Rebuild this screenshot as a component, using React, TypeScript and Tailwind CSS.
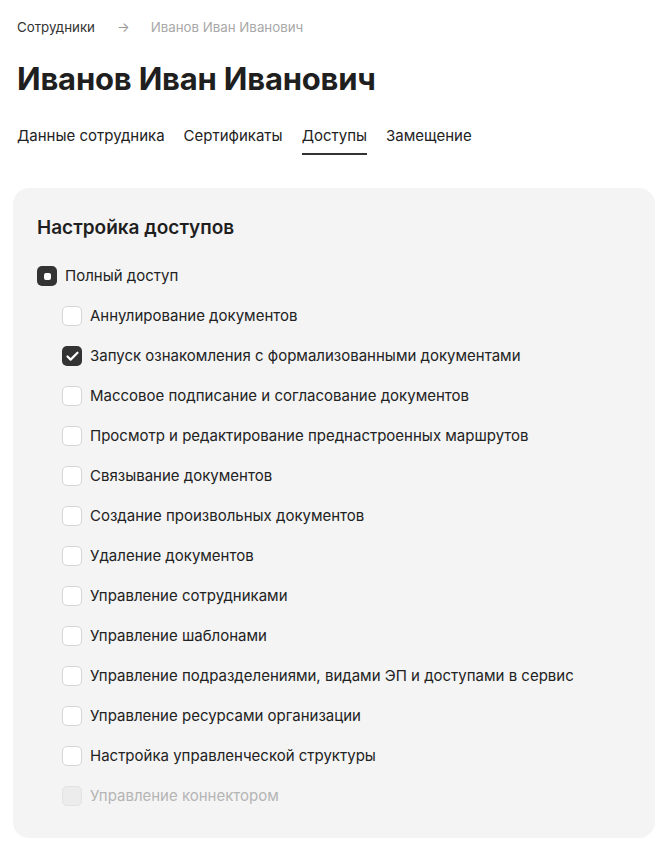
import { Check } from 'lucide-react';

type Perm = { label: string; checked?: boolean; disabled?: boolean };

const perms: Perm[] = [
  { label: 'Аннулирование документов' },
  { label: 'Запуск ознакомления с формализованными документами', checked: true },
  { label: 'Массовое подписание и согласование документов' },
  { label: 'Просмотр и редактирование преднастроенных маршрутов' },
  { label: 'Связывание документов' },
  { label: 'Создание произвольных документов' },
  { label: 'Удаление документов' },
  { label: 'Управление сотрудниками' },
  { label: 'Управление шаблонами' },
  { label: 'Управление подразделениями, видами ЭП и доступами в сервис' },
  { label: 'Управление ресурсами организации' },
  { label: 'Настройка управленческой структуры' },
  { label: 'Управление коннектором', disabled: true },
];

const tabs = ['Данные сотрудника', 'Сертификаты', 'Доступы', 'Замещение'];

function Box({ state }: { state: 'off' | 'on' | 'partial' | 'disabled' }) {
  if (state === 'on') {
    return (
      <span className="flex h-5 w-5 shrink-0 items-center justify-center rounded-[5px] bg-[#333333]">
        <Check size={15} strokeWidth={3.5} className="text-white" />
      </span>
    );
  }
  if (state === 'partial') {
    return (
      <span className="flex h-5 w-5 shrink-0 items-center justify-center rounded-[5px] bg-[#333333]">
        <span className="h-[7px] w-[7px] rounded-[2px] bg-white" />
      </span>
    );
  }
  if (state === 'disabled') {
    return <span className="h-5 w-5 shrink-0 rounded-[5px] border border-[#e2e2e2] bg-[#ececec]" />;
  }
  return <span className="h-5 w-5 shrink-0 rounded-[5px] border border-[#d6d6d6] bg-white" />;
}

export default function App() {
  return (
    <div
      className="min-h-[853px] bg-white px-[17px] pt-[18px] text-[#222222]"
      style={{ fontFamily: 'Inter, "Noto Sans", sans-serif' }}
    >
      <div className="flex items-center text-[13.3px] leading-[18px]">
        <span className="text-[#333333]">Сотрудники</span>
        <span className="ml-[22px] mr-[21px] text-[#9a9a9a]">→</span>
        <span className="text-[#a8a8a8]">Иванов Иван Иванович</span>
      </div>

      <h1 className="mt-[23px] text-[31px] font-bold leading-[40px] tracking-[-0.2px] text-[#1f1f1f]">
        Иванов Иван Иванович
      </h1>

      <div className="mt-[26px] flex gap-[19px] text-[15px] leading-[22px]">
        {tabs.map((t) => (
          <div
            key={t}
            className={
              t === 'Доступы'
                ? 'border-b-2 border-[#333333] pb-[6px] text-[#222222]'
                : 'pb-[8px] text-[#222222]'
            }
          >
            {t}
          </div>
        ))}
      </div>

      <div className="-mx-[4px] mt-[33px] rounded-[16px] bg-[#f4f4f4] px-[24px] pb-[32px] pt-[27px]">
        <h2 className="text-[19px] font-semibold leading-[26px] text-[#1f1f1f]">Настройка доступов</h2>
        <div className="mt-[25px] flex h-[20px] items-center gap-[8px] text-[15px]">
          <Box state="partial" />
          <span>Полный доступ</span>
        </div>
        <div className="flex flex-col pl-[25px]">
          {perms.map((p) => (
            <div key={p.label} className="mt-[20px] flex h-[20px] items-center gap-[8px] text-[15px]">
              <Box state={p.disabled ? 'disabled' : p.checked ? 'on' : 'off'} />
              <span className={p.disabled ? 'text-[#b5b5b5]' : 'text-[#222222]'}>{p.label}</span>
            </div>
          ))}
        </div>
      </div>
    </div>
  );
}
